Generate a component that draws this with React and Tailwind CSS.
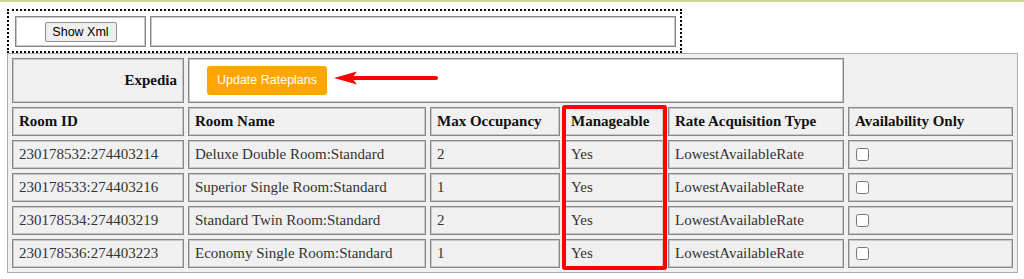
import React from "react";

const rooms = [
  { id: "230178532:274403214", name: "Deluxe Double Room:Standard", occupancy: 2 },
  { id: "230178533:274403216", name: "Superior Single Room:Standard", occupancy: 1 },
  { id: "230178534:274403219", name: "Standard Twin Room:Standard", occupancy: 2 },
  { id: "230178536:274403223", name: "Economy Single Room:Standard", occupancy: 1 },
];

const headers = [
  "Room ID",
  "Room Name",
  "Max Occupancy",
  "Manageable",
  "Rate Acquisition Type",
  "Availability Only",
];

const cellBase =
  "flex items-center px-[6px] border border-[#878787] shadow-[inset_0_0_0_1px_#c8c8c8]";

const Cell = ({ children, className = "" }) => (
  <div className={`${cellBase} h-[29px] bg-[#f0f0f0] ${className}`}>{children}</div>
);

const Arrow = () => (
  <svg width="104" height="16" viewBox="0 0 104 16" className="ml-[7px] mb-[6px]">
    <line x1="16" y1="8" x2="102" y2="8" stroke="#ff0000" strokeWidth="4" strokeLinecap="round" />
    <polygon points="0,8 23,1.5 18,8 23,14.5" fill="#ff0000" />
  </svg>
);

const App = () => {
  return (
    <div className="w-[1024px] h-[279px] bg-white overflow-hidden font-['Liberation_Serif','Times_New_Roman',serif]">
      <div className="h-[2px] bg-[#cdd497]" />

      {/* xml toolbar */}
      <div className="ml-[7px] mt-[7px] w-[675px] h-[44px] border-2 border-dotted border-black flex gap-[4px] pl-[6px] pr-[4px] pt-[5px]">
        <div className={`${cellBase} justify-center w-[131px] h-[31px] bg-white`}>
          <button className="h-[20px] w-[72px] bg-[#efefef] border border-[#8f8f8f] rounded-[2px] text-[12.5px] text-black font-['Liberation_Sans',Arial,sans-serif]">
            Show Xml
          </button>
        </div>
        <div className={`${cellBase} w-[526px] h-[31px] bg-white`} />
      </div>

      {/* rooms table */}
      <div className="relative ml-[7px] w-[1011px] border border-[#ababab] bg-[#f0f0f0]">
        <div className="grid grid-cols-[172px_238px_130px_100px_176px_165px] gap-[4px] p-[4px]">
          <div className={`${cellBase} h-[45px] justify-end bg-[#f0f0f0] text-[15px] font-bold text-[#111]`}>
            Expedia
          </div>
          <div className={`${cellBase} col-span-4 h-[45px] bg-white !px-0`}>
            <button className="ml-[18px] h-[29px] w-[120px] bg-[#ffa500] rounded-[3px] text-white text-[12.5px] font-['Liberation_Sans',Arial,sans-serif]">
              Update Rateplans
            </button>
            <Arrow />
          </div>
          <div />

          {headers.map((h) => (
            <Cell key={h} className="text-[15px] font-bold text-[#111]">
              {h}
            </Cell>
          ))}

          {rooms.map((room) => (
            <React.Fragment key={room.id}>
              <Cell className="text-[15px] text-[#333]">{room.id}</Cell>
              <Cell className="text-[15px] text-[#333]">{room.name}</Cell>
              <Cell className="text-[15px] text-[#333]">{room.occupancy}</Cell>
              <Cell className="text-[15px] text-[#333]">Yes</Cell>
              <Cell className="text-[15px] text-[#333]">LowestAvailableRate</Cell>
              <Cell>
                <input type="checkbox" className="m-0 ml-px w-[13px] h-[13px]" />
              </Cell>
            </React.Fragment>
          ))}
        </div>

        {/* highlight around the Manageable column */}
        <div className="absolute left-[554px] top-[51px] w-[105px] h-[165px] border-[4px] border-[#ff0000] rounded-[3px] pointer-events-none" />
      </div>
    </div>
  );
};

export default App;
